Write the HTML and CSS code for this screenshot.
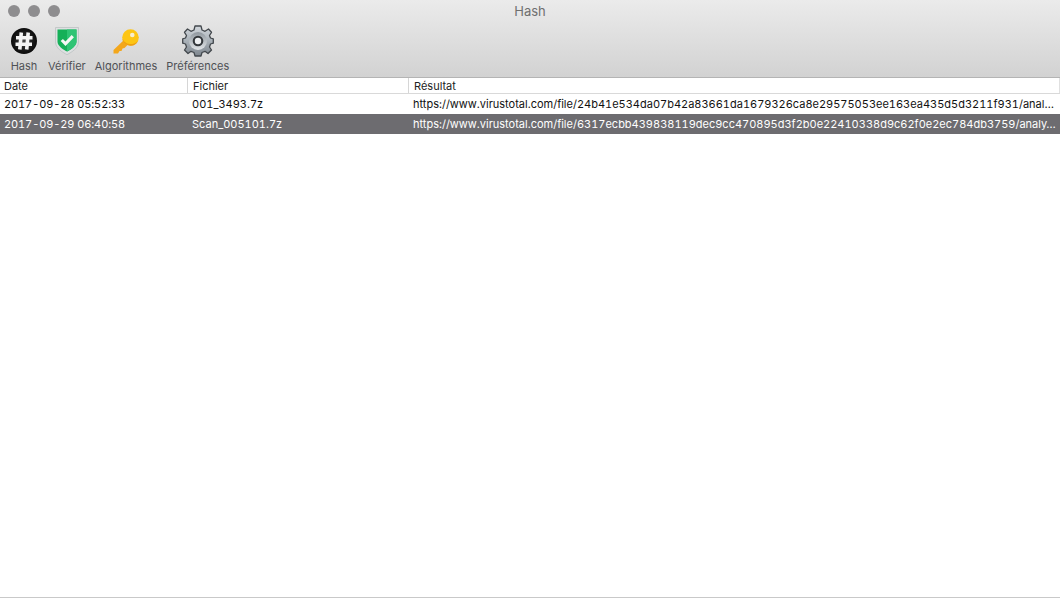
FILE: index.html
```html
<!DOCTYPE html>
<html lang="fr">
<head>
<meta charset="utf-8">
<title>Hash</title>
<link rel="stylesheet" href="styles.css">
</head>
<body>
<div class="window">
  <header class="chrome">
    <div class="titlebar">
      <div class="lights"><span class="light"></span><span class="light"></span><span class="light"></span></div>
      <div class="title">Hash</div>
    </div>
    <nav class="toolbar">
      <div class="tool tool-hash">
        <div class="iconbox">
        <svg viewBox="0 0 26 26" width="26" height="26">
          <defs><radialGradient id="ball" cx="50%" cy="50%" r="55%"><stop offset="0" stop-color="#4a4a4a"/><stop offset=".6" stop-color="#1c1c1c"/><stop offset="1" stop-color="#050505"/></radialGradient></defs>
          <circle cx="13" cy="13" r="13" fill="url(#ball)"/>
          <path d="M10.300 4.500 L8.800 21.500 M17.200 4.500 L15.700 21.500 M5 9.800 H21.500 M4.500 16.200 H21" stroke="#f4f4f4" stroke-width="3.600" fill="none"/>
        </svg>
        </div>
        <span class="label">Hash</span>
      </div>
      <div class="tool">
        <div class="iconbox">
        <svg viewBox="0 0 24 28" width="24" height="28">
          <path d="M.5 .5 H23.500 V15 C23.500 21 17 25 12 27.700 C7 25 .5 21 .5 15 Z" fill="#dde0e1" stroke="#bcc1c3" stroke-width=".8"/>
          <path d="M2.500 2.500 H21.500 V14.500 C21.500 19 16 22.500 12 24.500 C8 22.500 2.500 19 2.500 14.500 Z" fill="#15b058"/>
          <path d="M12 2.500 H21.500 V14.500 C21.500 19 16 22.500 12 24.500 Z" fill="#2fc474"/>
          <path d="M6.800 13 L10.500 16.800 L17.800 9.200" stroke="#f4f8f5" stroke-width="3.200" fill="none"/>
        </svg>
        </div>
        <span class="label">Vérifier</span>
      </div>
      <div class="tool">
        <div class="iconbox">
        <svg viewBox="0 0 26 25" width="26" height="25">
          <path d="M12 10 L.5 21 L.5 24.500 L5 24.500 L6.500 22 L8.500 22 L9.500 19.500 L11.500 19 L17 13.500 Z" fill="#f3a71c"/>
          <circle cx="17.500" cy="8.500" r="8.300" fill="#fdc514"/>
          <path d="M9.300 9.500 A8.300 8.300 0 0 0 25 12 A9.500 9.500 0 0 1 9.300 9.500 Z" fill="#ee9f12"/>
          <circle cx="19.300" cy="6" r="2.300" fill="#f7eed0"/>
        </svg>
        </div>
        <span class="label">Algorithmes</span>
      </div>
      <div class="tool">
        <div class="iconbox">
        <svg viewBox="0 0 32 32" width="32" height="32">
          <defs>
            <linearGradient id="steel" x1="0" y1="0" x2="0" y2="1"><stop offset="0" stop-color="#d2d7dc"/><stop offset=".5" stop-color="#a9b1b8"/><stop offset="1" stop-color="#7d858d"/></linearGradient>
            <linearGradient id="steel2" x1="0" y1="0" x2="0" y2="1"><stop offset="0" stop-color="#8f979e"/><stop offset="1" stop-color="#e0e4e7"/></linearGradient>
          </defs>
          <path d="M13 1 H19 L20 5 L23 6.300 L26.500 4 L29.500 7.300 L27.500 10.500 L28.500 13 L31.300 13.800 V18.200 L28.500 19 L27.500 22 L29.500 25 L26 28.500 L23 26.300 L20 27.500 L19 31 H13 L12 27.500 L9 26.300 L6 28.500 L2.500 25 L4.500 22 L3.500 19 L.7 18.200 V13.800 L3.500 13 L4.500 10.500 L2.500 7.300 L5.500 4 L9 6.300 L12 5 Z" fill="url(#steel)" stroke="#43484d" stroke-width="1.300" stroke-linejoin="round"/>
          <circle cx="16" cy="16" r="9" fill="url(#steel2)"/>
          <circle cx="16" cy="16" r="5.300" fill="#33373b"/>
          <circle cx="16" cy="16" r="3.200" fill="#eef0f2"/>
        </svg>
        </div>
        <span class="label">Préférences</span>
      </div>
    </nav>
  </header>
  <div class="table">
    <div class="row head">
      <div class="cell c-date">Date</div>
      <div class="cell c-file">Fichier</div>
      <div class="cell c-res">Résultat</div>
    </div>
    <div class="row">
      <div class="cell c-date">2017-09-28 05:52:33</div>
      <div class="cell c-file">001_3493.7z</div>
      <div class="cell c-res">https://www.virustotal.com/file/24b41e534da07b42a83661da1679326ca8e29575053ee163ea435d5d3211f931/anal…</div>
    </div>
    <div class="row selected">
      <div class="cell c-date">2017-09-29 06:40:58</div>
      <div class="cell c-file">Scan_005101.7z</div>
      <div class="cell c-res">https://www.virustotal.com/file/6317ecbb439838119dec9cc470895d3f2b0e22410338d9c62f0e2ec784db3759/analy…</div>
    </div>
  </div>
</div>
</body>
</html>
```
FILE: styles.css
```css
* { box-sizing: border-box; }
html, body { margin: 0; height: 100%; }
body { background: #fff; font-family: Inter, "Liberation Sans", sans-serif; font-size: 11px; font-variant-numeric: tabular-nums; overflow: hidden; }
.window { height: 598px; display: flex; flex-direction: column; border-bottom: 1px solid #c9c9c9; }
.chrome { height: 78px; flex: none; background: linear-gradient(#ebebeb, #d2d2d2); border-bottom: 1px solid #b4b4b4; }
.titlebar { height: 22px; display: grid; grid-template-columns: 1fr auto 1fr; align-items: center; padding: 0 8px; }
.lights { display: flex; gap: 8px; }
.light { width: 12px; height: 12px; border-radius: 50%; background: #8e8d8f; }
.title { font-size: 13px; color: #6f6f6f; grid-column: 2; }
.toolbar { display: flex; gap: 9px; padding: 2px 0 0 10px; }
.tool { display: flex; flex-direction: column; align-items: center; flex: none; }
.tool-hash { min-width: 28px; margin-right: 1px; }
.iconbox { height: 34px; display: flex; align-items: center; justify-content: center; }
.iconbox svg { display: block; }
.label { color: #4f5155; font-size: 11px; line-height: 14px; margin-top: 1px; white-space: nowrap; }
.table { flex: 1; min-height: 0; }
.row { display: flex; height: 20px; color: #111; }
.head { height: 16px; color: #222; border-bottom: 1px solid #d9d9d9; }
.selected { background: #6d6c70; color: #fff; }
.cell { white-space: nowrap; padding: 0 2px 0 4px; line-height: 20px; }
.head .cell { line-height: 16px; height: 15px; padding-left: 5px; }
.head .cell + .cell { border-left: 1px solid #d6d6d6; }
.head .c-date { width: 187px; padding-left: 4px; letter-spacing: 0; }
.head .c-res { border-right: 1px solid #e0e0e0; }
.c-date { width: 188px; flex: none; letter-spacing: -0.1px; }
.c-file { width: 221px; flex: none; }
.c-res { flex: 1; min-width: 0; }
```
